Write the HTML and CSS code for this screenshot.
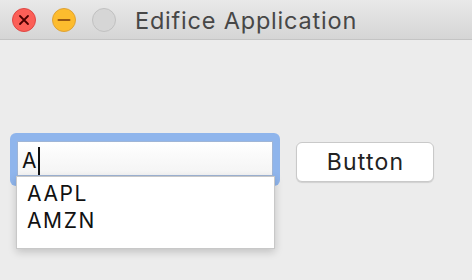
FILE: index.html
```html
<!DOCTYPE html>
<html>
<head>
<meta charset="utf-8">
<link rel="stylesheet" href="styles.css">
</head>
<body>
<div class="window">
  <div class="titlebar">
    <div class="lights">
      <span class="light red"><svg width="24" height="24" viewBox="0 0 24 24"><path d="M8 8 L16 16 M16 8 L8 16" stroke="#4d0000" stroke-width="1.8" stroke-linecap="round"/></svg></span>
      <span class="light yellow"><svg width="24" height="24" viewBox="0 0 24 24"><path d="M6.5 12 H17.5" stroke="#985712" stroke-width="2" stroke-linecap="round"/></svg></span>
      <span class="light gray"></span>
    </div>
    <div class="title">Edifice Application</div>
  </div>
  <div class="content">
    <div class="combo">
      <div class="ring">
        <div class="field"><span class="val">A</span><span class="caret"></span></div>
      </div>
      <ul class="popup">
        <li>AAPL</li>
        <li>AMZN</li>
      </ul>
    </div>
    <button class="btn">Button</button>
  </div>
</div>
</body>
</html>
```
FILE: styles.css
```css
html, body {
  margin: 0;
  padding: 0;
}
body {
  width: 472px;
  height: 280px;
  overflow: hidden;
  background: #ececec;
  font-family: "Inter", "Liberation Sans", sans-serif;
}
.window {
  width: 472px;
  height: 280px;
  display: flex;
  flex-direction: column;
}
.titlebar {
  height: 40px;
  box-sizing: border-box;
  border-bottom: 1px solid #c4c4c4;
  background: linear-gradient(#e9e9e9, #d5d5d5);
  display: flex;
  align-items: center;
  padding-left: 12px;
}
.lights {
  display: flex;
  gap: 16px;
}
.light {
  width: 24px;
  height: 24px;
  border-radius: 50%;
  box-sizing: border-box;
  display: block;
  position: relative;
}
.light svg {
  position: absolute;
  left: -1px;
  top: -1px;
}
.red {
  background: #fc5f57;
  border: 1px solid #df4744;
}
.yellow {
  background: #fdbc2e;
  border: 1px solid #dea236;
}
.gray {
  background: #d6d6d6;
  border: 1px solid #c1c1c1;
}
.title {
  margin-left: 19px;
  font-size: 23.5px;
  color: #474747;
  letter-spacing: 0.8px;
  margin-top: 1px;
}
.content {
  display: flex;
  align-items: flex-start;
  padding: 93px 0 0 10px;
}
.combo {
  position: relative;
}
.ring {
  width: 270px;
  height: 53px;
  box-sizing: border-box;
  border-radius: 6px;
  background: #8fb5ec;
  padding: 8px 7px 10px 7px;
}
.field {
  height: 35px;
  box-sizing: border-box;
  background: linear-gradient(#ffffff, #f4f4f4);
  border: 1px solid #9fb5d6;
  display: flex;
  align-items: center;
  padding-left: 4px;
  padding-top: 4px;
}
.val {
  font-size: 21px;
  color: #111;
  letter-spacing: 0.5px;
}
.caret {
  width: 2px;
  height: 28px;
  background: #111;
  margin-left: 1px;
}
.popup {
  position: absolute;
  left: 6px;
  top: 43px;
  width: 259px;
  height: 73px;
  box-sizing: border-box;
  margin: 0;
  padding: 4px 0 0 10px;
  list-style: none;
  background: #fff;
  border: 1px solid #c8c8c8;
  box-shadow: 0 3px 8px rgba(0,0,0,0.18);
  font-size: 21px;
  letter-spacing: 1.6px;
  color: #111;
}
.popup li {
  height: 27px;
  line-height: 26px;
}
.btn {
  margin: 9px 0 0 16px;
  width: 138px;
  height: 40px;
  box-sizing: border-box;
  background: #fff;
  border: 1px solid #c9c9c9;
  border-radius: 6px;
  box-shadow: 0 1px 1px rgba(0,0,0,0.12);
  font-family: "Inter", "Liberation Sans", sans-serif;
  font-size: 23px;
  letter-spacing: 1.2px;
  text-indent: 1px;
  color: #222;
  padding: 0;
}
```
